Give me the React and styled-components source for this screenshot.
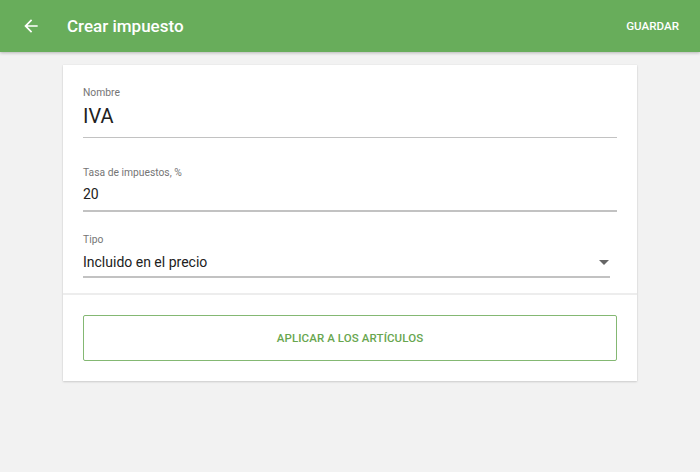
import styled, { createGlobalStyle } from "styled-components";

const GlobalStyle = createGlobalStyle`
	html, body {
		margin: 0;
		padding: 0;
		background: #f2f2f2;
		font-family: Roboto, "Liberation Sans", sans-serif;
	}
`;

const Page = styled.div`
	width: 700px;
	height: 472px;
	background: #f2f2f2;
`;

const TopBar = styled.header`
	height: 52px;
	background: #68ad5b;
	display: flex;
	align-items: center;
	padding: 0 21px 0 21px;
	box-shadow: 0 1px 3px rgba(0, 0, 0, 0.25);
	color: #fff;
`;

const BackButton = styled.div`
	width: 20px;
	height: 20px;
	display: flex;
	align-items: center;
	justify-content: center;
`;

const Title = styled.h1`
	margin: 0 0 0 26px;
	font-size: 17px;
	font-weight: 500;
	flex: 1;
`;

const SaveButton = styled.div`
	font-size: 11.6px;
	font-weight: 500;
`;

const Card = styled.section`
	width: 574px;
	margin: 13px auto 0;
	background: #fff;
	box-shadow: 0 1px 2px rgba(0, 0, 0, 0.15), 0 0 1px rgba(0, 0, 0, 0.1);
`;

const Fields = styled.div`
	padding: 21px 20px 15px 20px;
	display: flex;
	flex-direction: column;
	border-bottom: 2px solid #ededed;
`;

const Field = styled.div`
	display: flex;
	flex-direction: column;
	margin-top: ${(p) => p.$top || 0}px;
	padding-right: ${(p) => (p.$select ? "7px" : "0")};
`;

const Label = styled.label`
	font-size: 10.3px;
	color: #757575;
	line-height: 14px;
	margin-bottom: ${(p) => p.$gap || 0}px;
`;

const Value = styled.div`
	font-size: ${(p) => p.$size || 14}px;
	color: #212121;
	line-height: ${(p) => (p.$size ? 26 : 20)}px;
	padding-bottom: ${(p) => p.$pad}px;
	border-bottom: ${(p) => p.$line}px solid #c2c2c2;
	display: flex;
	align-items: center;
	justify-content: space-between;
`;

const Caret = styled.span`
	width: 0;
	height: 0;
	border-left: 5px solid transparent;
	border-right: 5px solid transparent;
	border-top: 5px solid #666;
	margin-right: 1px;
`;

const Actions = styled.div`
	padding: 20px;
`;

const OutlineButton = styled.button`
	width: 100%;
	height: 46px;
	background: #fff;
	border: 1px solid #84b873;
	border-radius: 2px;
	color: #68a64f;
	font-family: Roboto, "Liberation Sans", sans-serif;
	font-size: 11.5px;
	font-weight: 500;
	letter-spacing: 0.1px;
`;

export default function App() {
	return (
		<Page>
			<GlobalStyle />
			<TopBar>
				<BackButton>
					<svg width="20" height="20" viewBox="0 0 24 24">
						<path
							d="M20 11H7.83l5.59-5.59L12 4l-8 8 8 8 1.41-1.41L7.83 13H20v-2z"
							fill="#fff"
						/>
					</svg>
				</BackButton>
				<Title>Crear impuesto</Title>
				<SaveButton>GUARDAR</SaveButton>
			</TopBar>
			<Card>
				<Fields>
					<Field>
						<Label $gap={3}>Nombre</Label>
						<Value $size={20} $pad={8} $line={1}>
							IVA
						</Value>
					</Field>
					<Field $top={28}>
						<Label $gap={4}>Tasa de impuestos, %</Label>
						<Value $pad={6} $line={2}>
							20
						</Value>
					</Field>
					<Field $top={21} $select>
						<Label $gap={5}>Tipo</Label>
						<Value $pad={4} $line={2}>
							Incluido en el precio
							<Caret />
						</Value>
					</Field>
				</Fields>
				<Actions>
					<OutlineButton>APLICAR A LOS ARTÍCULOS</OutlineButton>
				</Actions>
			</Card>
		</Page>
	);
}
